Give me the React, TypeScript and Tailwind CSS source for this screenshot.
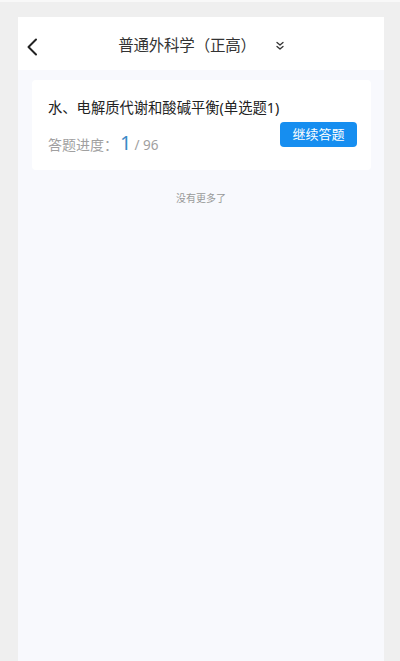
import React from "react";

export default function App() {
  const font = { fontFamily: '"Noto Sans", "Noto Sans CJK SC", sans-serif' };
  return (
    <div className="w-[400px] h-[661px] bg-[#efefef] overflow-hidden" style={font}>
      <div className="h-[2px] bg-[#f8f8f8]" />
      <div className="ml-[18px] mr-[16px] mt-[15px] h-[644px] flex flex-col bg-[#f8f9fd]">
        {/* header */}
        <div className="h-[53px] bg-white relative flex items-center justify-center pt-[5px]">
          <svg className="absolute left-[8px] top-[21px]" width="12" height="18" viewBox="0 0 12 18">
            <path d="M10 1.5 L2.5 9 L10 16.5" fill="none" stroke="#222" strokeWidth="2" strokeLinecap="round" strokeLinejoin="round" />
          </svg>
          <div className="flex items-center">
            <span className="text-[15.5px] text-[#333] leading-none tracking-[-0.2px]">普通外科学（正高）</span>
            <svg className="ml-[20px]" width="8" height="10" viewBox="0 0 8 10">
              <path d="M1 1.5 L4 4 L7 1.5 M1 5.5 L4 8 L7 5.5" fill="none" stroke="#333" strokeWidth="1.3" strokeLinecap="round" strokeLinejoin="round" />
            </svg>
          </div>
        </div>
        {/* card */}
        <div className="ml-[14px] mr-[13px] mt-[10px] h-[90px] bg-white rounded-[4px] pl-[16px] pr-[14px] pt-[19px]">
          <div className="text-[14.3px] text-[#222] leading-[18px]">水、电解质代谢和酸碱平衡(单选题1)</div>
          <div className="flex items-start justify-between">
            <div className="flex items-baseline mt-[16px]">
              <span className="text-[14px] text-[#a0a0a0]">答题进度：</span>
              <span className="text-[20px] text-[#3a8ac6] leading-none ml-[2px]">1</span>
              <span className="text-[13.5px] text-[#a0a0a0] ml-[3px]">/ 96</span>
            </div>
            <button className="w-[77px] h-[25px] mt-[5px] bg-[#168ef0] rounded-[4px] text-white text-[13px] flex items-center justify-center">
              继续答题
            </button>
          </div>
        </div>
        <div className="text-center text-[10px] text-[#999] mt-[21px]">没有更多了</div>
      </div>
    </div>
  );
}
